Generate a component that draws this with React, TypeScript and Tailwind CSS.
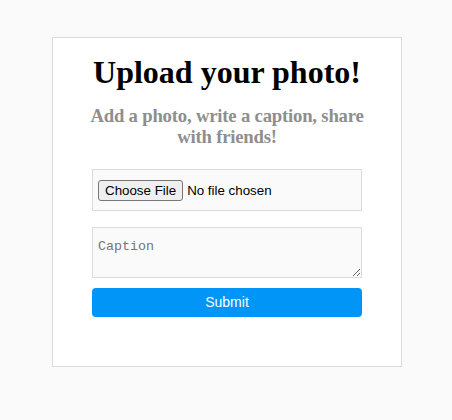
import React from "react";

export default function App() {
  return (
    <div className="min-h-screen bg-[#fafafa] pt-[37px]">
      <div className="ml-[52px] w-[350px] h-[330px] border border-[#dbdbdb] bg-white px-[39px] font-['Liberation_Serif',serif]">
        <h1 className="mt-[17px] text-center text-[32px] leading-[35px] font-bold text-black">
          Upload your photo!
        </h1>
        <h3 className="-mx-[5px] mt-[15px] text-center text-[18.72px] leading-[21px] font-bold tracking-[-0.2px] text-[#8e8e8e]">
          Add a photo, write a caption, share with friends!
        </h3>
        <form className="mt-[22px]" onSubmit={(e) => e.preventDefault()}>
          <div className="h-[42px] border border-[#dbdbdb] bg-[#fafafa] px-[5px] flex items-center">
            <input
              type="file"
              className="font-['Liberation_Sans',Arial,sans-serif] text-[13.33px] text-black file:mr-[4px] file:h-[21px] file:rounded-[3px] file:border file:border-solid file:border-[#767676] file:bg-[#efefef] file:px-[6px] file:text-[13.33px] file:text-black"
            />
          </div>
          <textarea
            placeholder="Caption"
            className="mt-[16px] block h-[51px] w-full border border-[#dbdbdb] bg-[#fafafa] px-[5px] pt-[9px] pb-[4px] font-['Liberation_Mono',monospace] text-[13.33px] placeholder:text-[#757575] resize"
          />
          <button
            type="submit"
            className="mt-[10px] block h-[29px] w-full rounded-[4px] bg-[#0095f6] font-['Liberation_Sans',Arial,sans-serif] text-[14px] text-white"
          >
            Submit
          </button>
        </form>
      </div>
    </div>
  );
}
